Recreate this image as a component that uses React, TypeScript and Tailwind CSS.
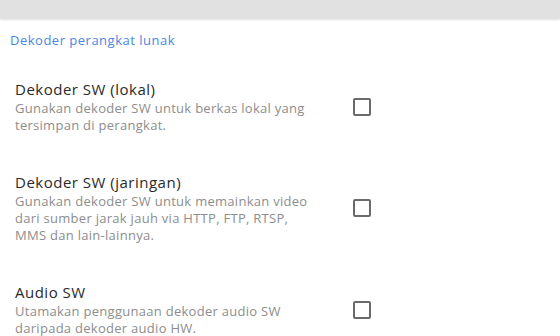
import React from "react";

const rows = [
  {
    title: "Dekoder SW (lokal)",
    lines: ["Gunakan dekoder SW untuk berkas lokal yang", "tersimpan di perangkat."],
  },
  {
    title: "Dekoder SW (jaringan)",
    lines: [
      "Gunakan dekoder SW untuk memainkan video",
      "dari sumber jarak jauh via HTTP, FTP, RTSP,",
      "MMS dan lain-lainnya.",
    ],
  },
  {
    title: "Audio SW",
    lines: ["Utamakan penggunaan dekoder audio SW", "daripada dekoder audio HW."],
  },
];

export default function App() {
  return (
    <div
      className="w-[560px] h-[336px] overflow-hidden bg-white"
      style={{ fontFamily: '"Open Sans", "Noto Sans", sans-serif' }}
    >
      <div className="h-[19px] bg-[#e1e1e1] shadow-[0_1px_2px_rgba(0,0,0,0.12)]" />
      <div className="pl-[10px] pt-[11px] pb-[10px] text-[13px] leading-[20px] tracking-[0.5px] text-[#4a85e4]">
        Dekoder perangkat lunak
      </div>
      {rows.map((r) => (
        <div key={r.title} className="flex items-center py-[19px] pl-[15px]">
          <div className="w-[330px]">
            <div className="text-[15px] leading-[21px] tracking-[0.5px] text-[#2a2a2a]">{r.title}</div>
            {r.lines.map((l) => (
              <div
                key={l}
                className="text-[13px] leading-[17px] tracking-[0.28px] text-[#8d8d8d] whitespace-nowrap"
              >
                {l}
              </div>
            ))}
          </div>
          <div className="ml-[8px] w-[18px] h-[18px] rounded-[2px] border-2 border-[#6a6a6a]" />
        </div>
      ))}
    </div>
  );
}
